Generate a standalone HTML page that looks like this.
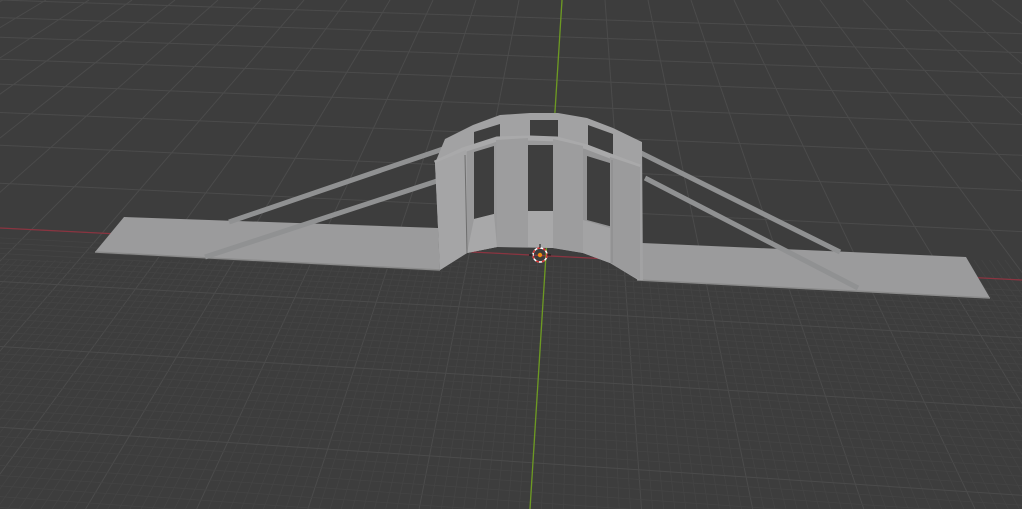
<!DOCTYPE html>
<html><head><meta charset="utf-8"><style>
html,body{margin:0;padding:0;background:#3d3d3d;overflow:hidden}
svg{display:block}
</style></head><body>
<svg id="s" width="1022" height="509" viewBox="0 0 1022 509" xmlns="http://www.w3.org/2000/svg">
<rect width="1022" height="509" fill="#3d3d3d"/>
<g id="grid"></g>
<line x1="0" y1="228" x2="1022" y2="280" stroke="#8a3440" stroke-width="1.3"/>
<line x1="562" y1="0" x2="530" y2="509" stroke="#6d9a22" stroke-width="1.3"/>
<!-- decks -->
<polygon points="124,217 95,252 440,270 438,228" fill="#9b9b9c"/>
<line x1="95" y1="252" x2="440" y2="270" stroke="#8a8a8a" stroke-width="1.5"/>
<polygon points="642,243 966,257 990,298 637,280" fill="#9b9b9c"/>
<line x1="637" y1="280" x2="990" y2="298" stroke="#8a8a8a" stroke-width="1.5"/>
<!-- cables -->
<g stroke="#909192" stroke-width="5" stroke-linecap="butt">
<line x1="229" y1="222" x2="446" y2="148"/>
<line x1="205" y1="257" x2="437" y2="181"/>
<line x1="641" y1="153" x2="840" y2="252"/>
<line x1="645" y1="178" x2="858" y2="288"/>
</g>
<!-- structure silhouette -->
<polygon points="445,139 473,125 500,115 530,113 558,113 587,118 613,128 642,142 643,280 638,280 610,263 583,253 553,248 497,247 467,253 440,270 435,163" fill="#a2a2a3"/>
<!-- upper back windows -->
<polygon points="474,132 500,124 500,142 474,150" fill="#3e3e3e"/>
<polygon points="530,120 558,120 558,142 530,142" fill="#3e3e3e"/>
<polygon points="588,125 613,134 613,158 588,150" fill="#3e3e3e"/>
<!-- back inner wall darker -->
<polygon points="467,150 497,140 497,247 467,253" fill="#9a9a9b"/>
<polygon points="528,138 553,139 553,248 528,247" fill="#9a9a9b"/>
<polygon points="583,147 610,157 610,263 583,253" fill="#959596"/>
<!-- lower windows -->
<polygon points="474,152 494,146 494,214 474,219" fill="#3e3e3e"/>
<polygon points="528,145 556,145 556,211 528,211" fill="#3e3e3e"/>
<polygon points="587,156 613,164 613,227 587,220" fill="#3e3e3e"/>
<!-- floor lighter -->
<polygon points="474,219 494,214 497,247 467,253" fill="#a8a8a9"/>
<polygon points="528,211 553,211 553,248 528,247" fill="#a8a8a9"/>
<polygon points="583,220 610,228 610,263 583,253" fill="#a3a3a4"/>
<!-- front rail -->
<polyline points="435,163 463,150 497,139 530,138 557,139 587,147 613,157 640,167" fill="none" stroke="#a9a9aa" stroke-width="5"/>
<!-- front panels -->
<polygon points="435,163 466,150 467,253 440,270" fill="#a5a5a6"/>
<polygon points="496,140 528,138 528,247 497,247" fill="#9d9d9e"/>
<polygon points="553,139 583,146 583,253 553,248" fill="#9d9d9e"/>
<polygon points="610,157 640,167 640,280 610,263" fill="#9b9b9c"/>
<line x1="465" y1="155" x2="467" y2="253" stroke="#6e6e6e" stroke-width="1"/>
<line x1="612" y1="160" x2="612" y2="263" stroke="#8a8a8a" stroke-width="1"/>
<!-- 3d cursor -->
<circle cx="540" cy="255" r="7" fill="none" stroke="#ffffff" stroke-width="1.5"/>
<circle cx="540" cy="255" r="7" fill="none" stroke="#d03030" stroke-width="1.5" stroke-dasharray="3 3"/>
<line x1="540" y1="244" x2="540" y2="248" stroke="#111" stroke-width="1"/>
<line x1="529" y1="255" x2="533" y2="255" stroke="#111" stroke-width="1"/>
<line x1="547" y1="255" x2="551" y2="255" stroke="#111" stroke-width="1"/>
<circle cx="540" cy="255" r="2.2" fill="#f08a10"/>
</svg>
<script>
(function(){
var g=document.getElementById('grid');var NS='http://www.w3.org/2000/svg';var h='';
function ln(x1,y1,x2,y2,c,w){h+='<line x1="'+x1.toFixed(1)+'" y1="'+y1.toFixed(1)+'" x2="'+x2.toFixed(1)+'" y2="'+y2.toFixed(1)+'" stroke="'+c+'" stroke-width="'+w+'"/>';}
var vx=582,vy=-321;
// columns
for(var j=-400;j<=400;j++){
  var x0=562+4.3*j;var major=(j%10===0);
  var t=(509-vy)/(0-vy);var xb=vx+(x0-vx)*t;
  if(major){ln(x0,0,xb,509,'#4b4b4b',1);}
  else{h+='<line x1="'+(vx+(x0-vx)*((260-vy)/(-vy))).toFixed(1)+'" y1="260" x2="'+xb.toFixed(1)+'" y2="509" stroke="#444444" stroke-width="0.8"/>';}
}
// rows
var a=1/321,d=(a-1/549)/8;
for(var k=-2;k<=120;k++){
  var kk=k/10;var inv=a-d*kk;if(inv<=0.0008)break;
  var y0=1/inv-321;if(y0>520)break;
  var s=(y0+420)/12737;
  var major=(k%10===0);
  if(major)ln(0,y0,1022,y0+s*1022,'#4b4b4b',1);
  else if(y0>235)ln(0,y0,1022,y0+s*1022,'#444444',0.8);
}
g.innerHTML=h;
})();
</script>
</body></html>
